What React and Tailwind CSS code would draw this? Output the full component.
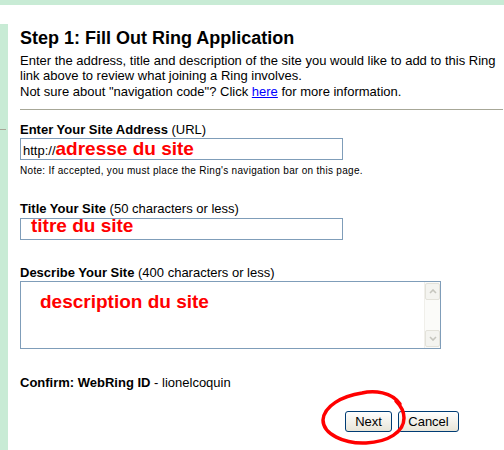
export default function App() {
  return (
    <div className="relative w-[504px] h-[450px] overflow-hidden bg-white text-black font-['Liberation_Sans',Arial,sans-serif]">
      <div className="h-[5px] bg-[#c8ebd5]" />
      <div className="h-[19px]" />
      <div className="flex">
        <div className="w-[8px] h-[426px] bg-[#c8ebd5] flex flex-col shrink-0">
          <div className="h-[105px]" />
          <div className="h-px w-[6px] bg-[#a7a797]" />
        </div>
        <div className="pl-[12px] pt-[4px] w-[496px] shrink-0">
          <h1 className="text-[18px] leading-[21px] font-bold whitespace-nowrap">Step 1: Fill Out Ring Application</h1>
          <p className="mt-[4px] text-[13px] leading-[15px] w-[490px]">
            Enter the address, title and description of the site you would like to add to this Ring link above to review what joining a Ring involves.
          </p>
          <p className="mt-[1px] text-[13px] leading-[15px] whitespace-nowrap">
            Not sure about "navigation code"? Click <span className="text-[#0000ff] underline">here</span> for more information.
          </p>
          <div className="mt-[10px] h-px w-[483px] bg-[#a7a797]" />

          <div className="mt-[12px] text-[13px] leading-[15px] whitespace-nowrap">
            <span className="font-bold">Enter Your Site Address</span> (URL)
          </div>
          <div className="mt-[1px] h-[22px] w-[323px] border border-[#7f9db9] flex items-baseline pl-[2px] overflow-visible">
            <span className="text-[13px] leading-[15px]">http://</span>
            <span className="text-[19px] leading-[20px] font-bold text-[#ff0000] whitespace-nowrap">adresse du site</span>
          </div>
          <div className="mt-[5px] text-[10px] leading-[12px] tracking-[0.3px] whitespace-nowrap">
            Note: If accepted, you must place the Ring's navigation bar on this page.
          </div>

          <div className="mt-[24px] text-[13px] leading-[15px] whitespace-nowrap">
            <span className="font-bold">Title Your Site</span> (50 characters or less)
          </div>
          <div className="mt-[2px] h-[22px] w-[323px] border border-[#7f9db9] flex items-start pl-[10px]">
            <span className="text-[19px] leading-[14px] font-bold text-[#ff0000] whitespace-nowrap">titre du site</span>
          </div>

          <div className="mt-[25px] text-[13px] leading-[15px] whitespace-nowrap">
            <span className="font-bold">Describe Your Site</span> (400 characters or less)
          </div>
          <div className="mt-[1px] h-[68px] w-[421px] border border-[#7f9db9] flex">
            <div className="flex-1 pl-[19px] pt-[10px]">
              <span className="block text-[19px] leading-[20px] font-bold text-[#ff0000] whitespace-nowrap">description du site</span>
            </div>
            <div className="w-[16px] h-full flex flex-col bg-[#fbfbf9] border-l border-[#f0efea]">
              <div className="h-[17px] mt-[1px] border border-[#e3e2da] rounded-[2px] bg-[#f4f4f0] flex items-center justify-center">
                <svg width="8" height="5" viewBox="0 0 8 5">
                  <polyline points="1,4 4,1 7,4" fill="none" stroke="#c6c6be" strokeWidth="1.6" />
                </svg>
              </div>
              <div className="flex-1" />
              <div className="h-[17px] mb-[1px] border border-[#e3e2da] rounded-[2px] bg-[#f4f4f0] flex items-center justify-center">
                <svg width="8" height="5" viewBox="0 0 8 5">
                  <polyline points="1,1 4,4 7,1" fill="none" stroke="#c6c6be" strokeWidth="1.6" />
                </svg>
              </div>
            </div>
          </div>

          <div className="mt-[26px] text-[13px] leading-[15px] whitespace-nowrap">
            <span className="font-bold">Confirm: WebRing ID</span> - lionelcoquin
          </div>

          <div className="mt-[21px] flex gap-[6px] pl-[325px]">
            <button className="w-[47px] h-[21px] border border-[#003c74] rounded-[3px] bg-linear-to-b from-white to-[#e8e5d8] text-[13px] leading-[15px] flex items-center justify-center">
              Next
            </button>
            <button className="w-[61px] h-[21px] border border-[#003c74] rounded-[3px] bg-linear-to-b from-white to-[#e8e5d8] text-[13px] leading-[15px] flex items-center justify-center">
              Cancel
            </button>
          </div>
        </div>
      </div>

      <svg className="absolute left-[316px] top-[386px]" width="96" height="62" viewBox="0 0 96 62">
        <path
          d="M 84 18 C 76 6, 58 4, 46 7 C 26 10, 8 20, 7 34 C 7 48, 28 58, 50 57 C 72 56, 88 46, 88 32 C 88 24, 84 19, 80 15"
          fill="none"
          stroke="#ff0000"
          strokeWidth="3.5"
          strokeLinecap="round"
        />
      </svg>
    </div>
  );
}
